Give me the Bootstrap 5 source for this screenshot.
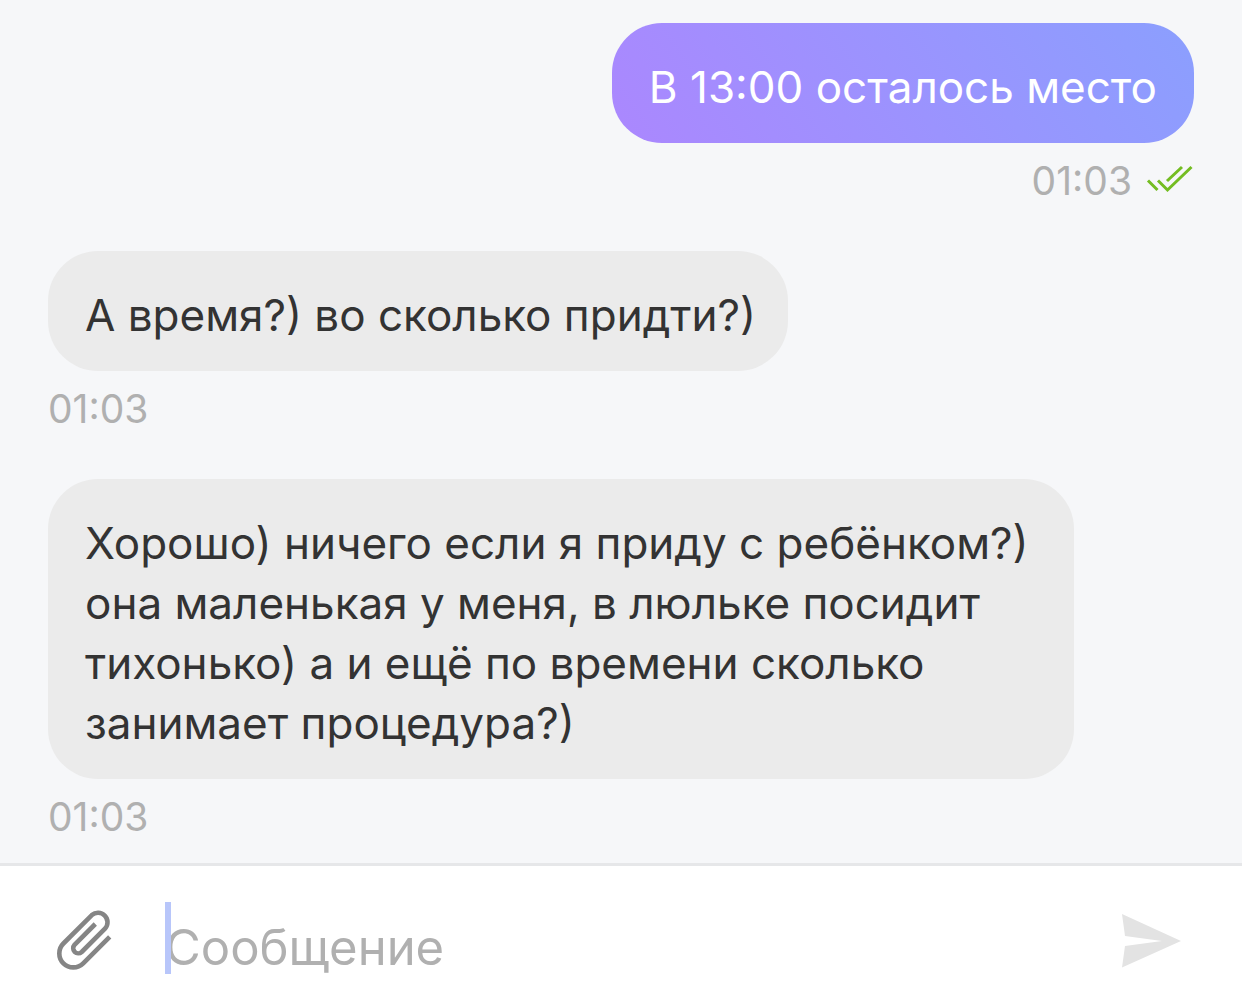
<!DOCTYPE html>
<html lang="ru">
<head>
<meta charset="utf-8">
<meta name="viewport" content="width=device-width, initial-scale=1">
<title>Чат</title>
<link rel="stylesheet" href="https://cdn.jsdelivr.net/npm/bootstrap@5.3.0/dist/css/bootstrap.min.css">
<style>
  body { font-family: Inter, Roboto, sans-serif; background: #f6f7f9; }
  .chat-log { padding: 23px 48px 16px; gap: 40px; }
  .bubble { font-size: 44px; line-height: 60px; padding: 34px 37px 26px; border-radius: 50px; }
  .bubble-out { color: #fff; background: linear-gradient(55deg, #ab87fe, #8b9ffe); }
  .bubble-in { color: #333; background: #ebebeb; padding-right: 32px; }
  .msg { max-width: 1026px; }
  .stamp { font-size: 39px; line-height: 60px; color: #b0b0b0; gap: 14px; }
  .composer { border-top: 3px solid #e6e7e9; padding: 36px 54px 34px; }
  .field-wrap { margin-left: 51px; }
  .field { font-size: 49px; line-height: 56px; padding: 18px 0 0; height: 72px; color: #333; caret-color: #b8c6fa; }
  .field::placeholder { color: #b0b0b0; opacity: 1; }
  .caret { width: 6px; background: #b8c6fa; }
  svg { display: block; }
</style>
<script src="https://cdn.jsdelivr.net/npm/bootstrap@5.3.0/dist/js/bootstrap.bundle.min.js"></script>
</head>
<body>
<div class="min-vh-100 d-flex flex-column">
  <main class="chat-log flex-grow-1 d-flex flex-column">
    <article class="msg align-self-end d-flex flex-column align-items-end">
      <p class="bubble bubble-out mb-2">В 13:00 осталось место</p>
      <div class="stamp d-flex align-items-center">
        <time datetime="01:03">01:03</time>
        <svg width="48" height="34" viewBox="0 0 48 34" fill="none" stroke="#74bd22" stroke-width="3" role="img" aria-label="Прочитано">
          <path d="M2 16.500 11.500 26M12 16.500l9.500 9.500L45.500 3M21 17 36 3"/>
        </svg>
      </div>
    </article>
    <article class="msg align-self-start">
      <p class="bubble bubble-in mb-2">А время?) во сколько придти?)</p>
      <div class="stamp"><time datetime="01:03">01:03</time></div>
    </article>
    <article class="msg align-self-start">
      <p class="bubble bubble-in mb-2">Хорошо) ничего если я приду с ребёнком?) она маленькая у меня, в люльке посидит тихонько) а и ещё по времени сколько занимает процедура?)</p>
      <div class="stamp"><time datetime="01:03">01:03</time></div>
    </article>
  </main>
  <form class="composer bg-white d-flex align-items-center">
    <button type="button" class="btn p-0 border-0" aria-label="Прикрепить файл">
      <svg width="60" height="70" viewBox="0 -4 60 70" fill="none" stroke="#858585" stroke-width="4.600">
        <path d="M41.300 17 20.500 37.800A5.100 5.100 0 0 0 27.700 45L51.200 21.500A9.500 9.500 0 0 0 37.800 8.100L9.400 36.500A14 14 0 0 0 29.200 56.300L55.700 29.800"/>
      </svg>
    </button>
    <div class="field-wrap position-relative flex-grow-1">
      <input id="message" type="text" class="field form-control border-0 rounded-0 shadow-none bg-transparent" placeholder="Сообщение" aria-label="Сообщение">
      <span class="caret position-absolute top-0 start-0 h-100"></span>
    </div>
    <button type="submit" class="btn p-0 border-0" aria-label="Отправить">
      <svg width="66" height="62" viewBox="0 -2 66 62" fill="#e3e3e3">
        <path d="M0 5 59 32 0 58.500 3 37 40 32 3 27Z"/>
      </svg>
    </button>
  </form>
</div>
</body>
</html>
